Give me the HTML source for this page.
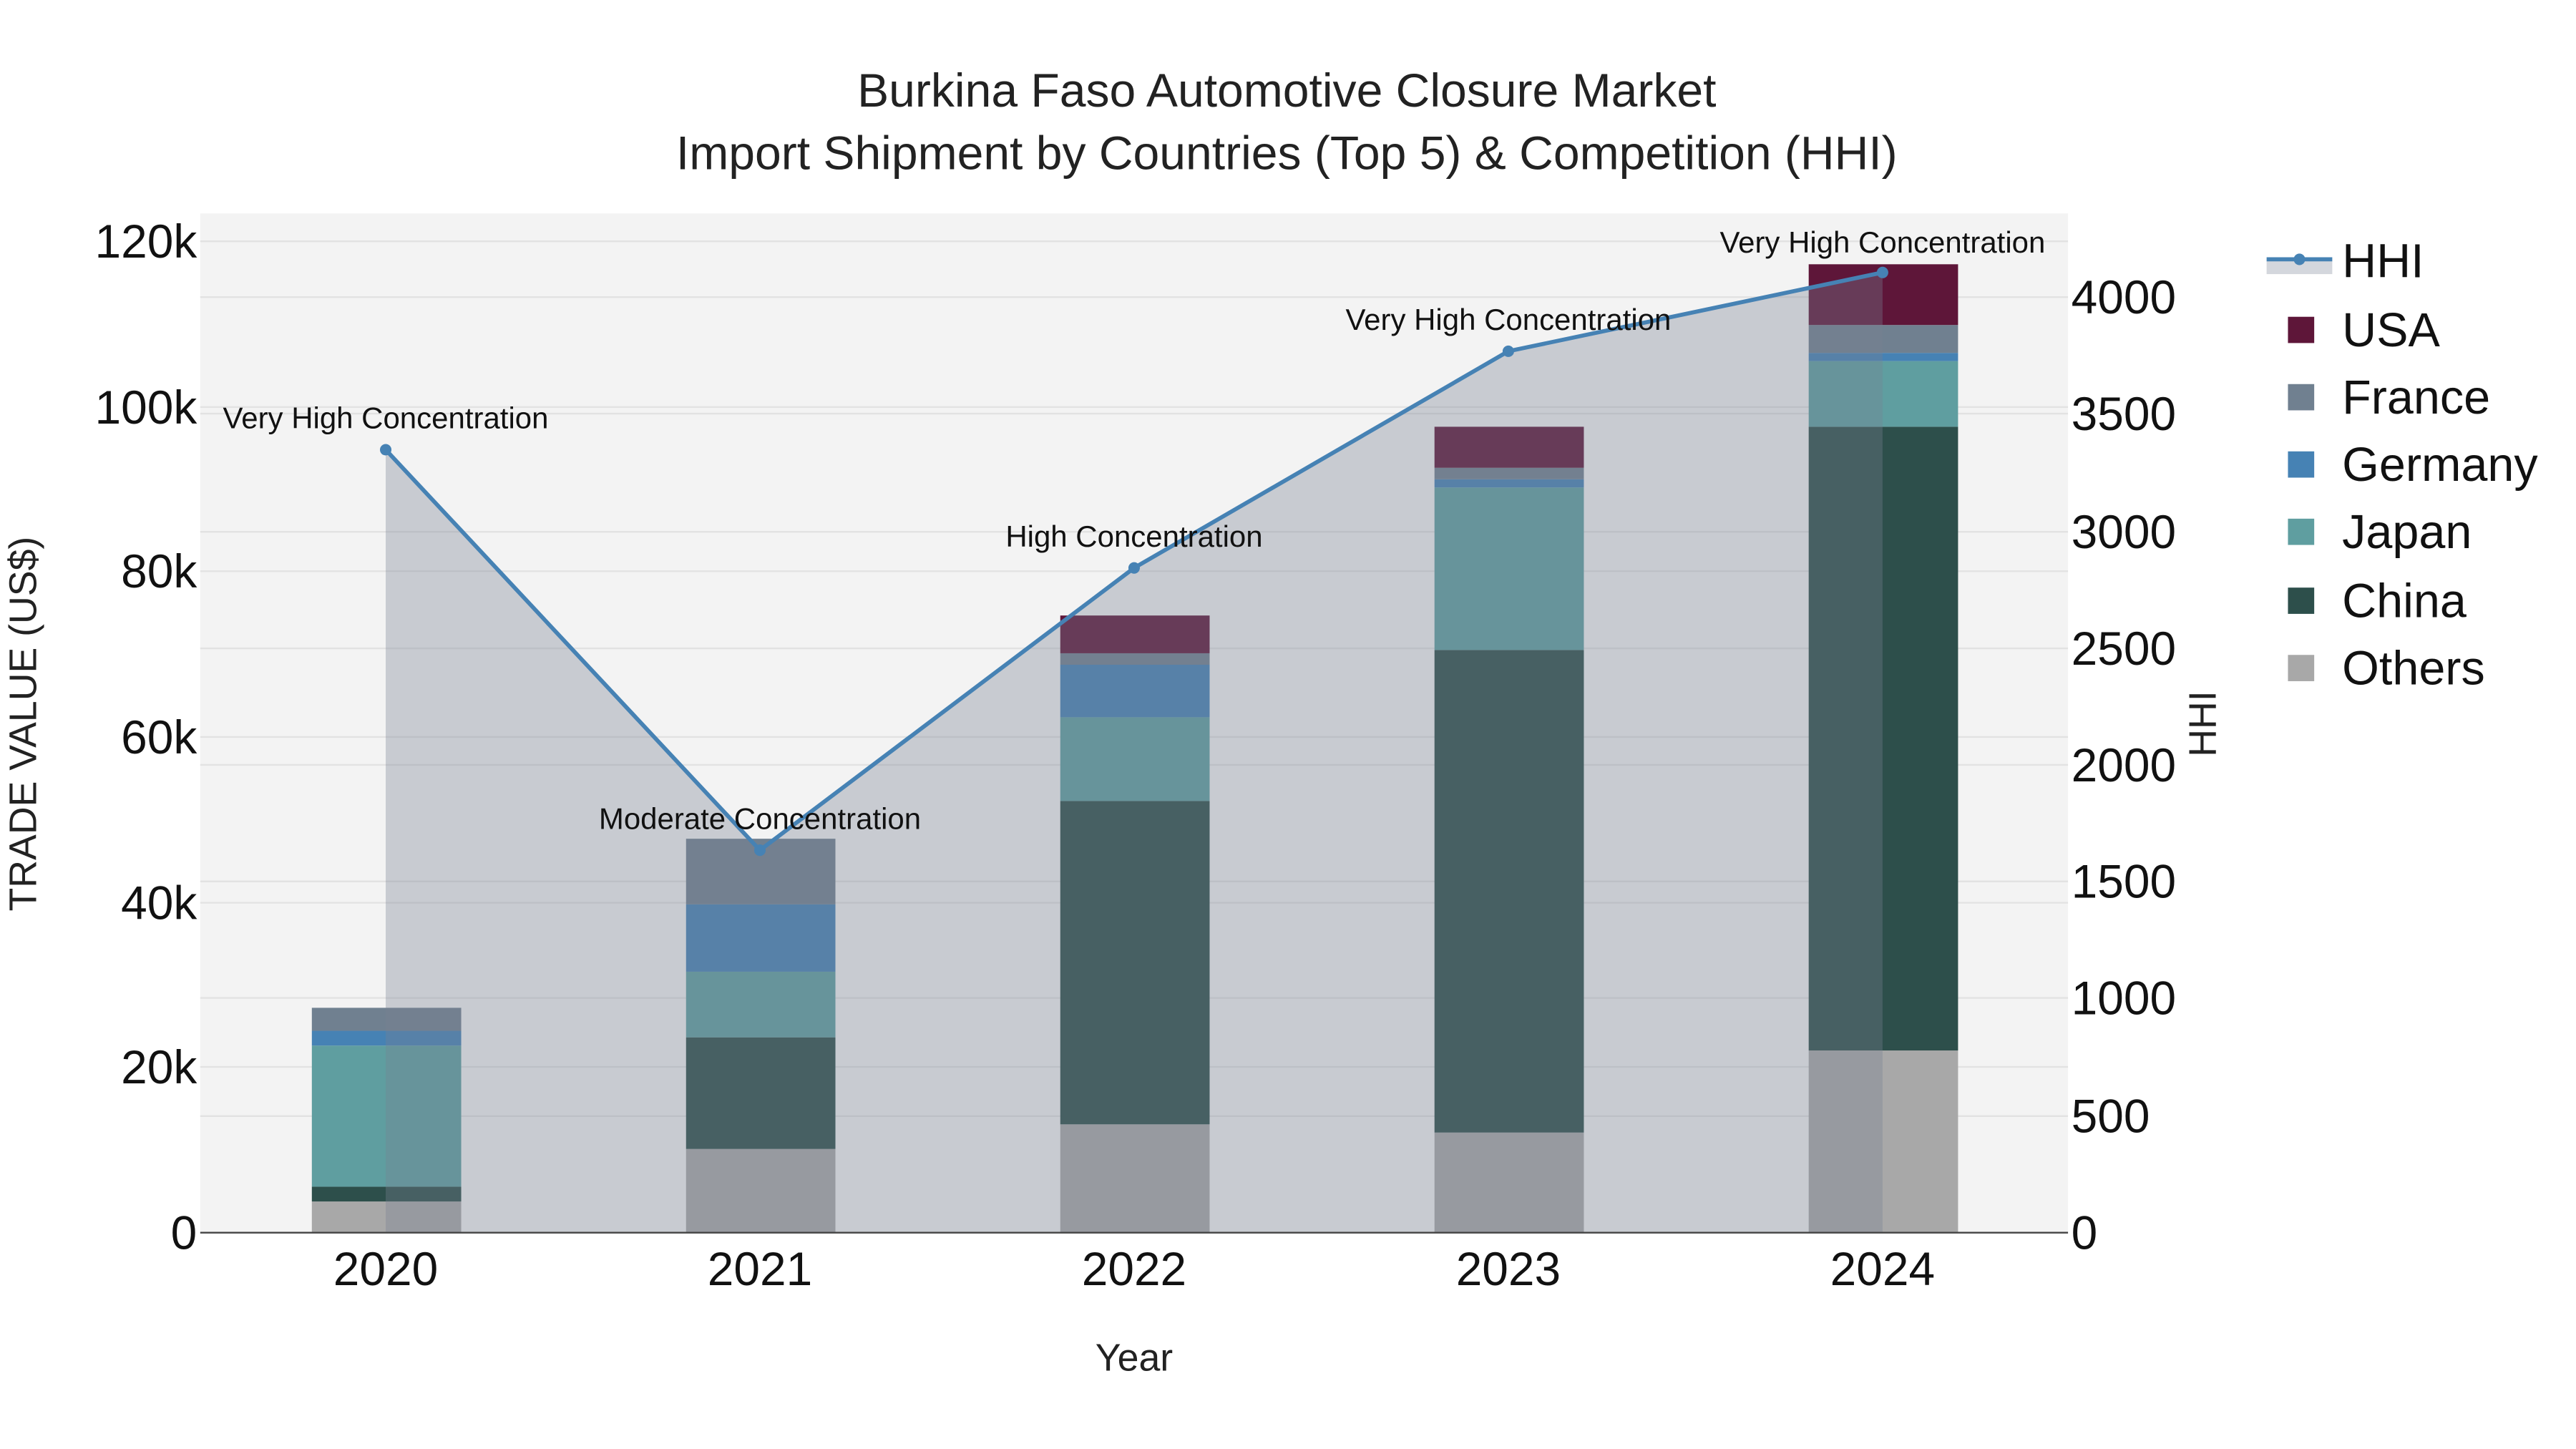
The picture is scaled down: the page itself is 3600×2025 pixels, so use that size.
<!DOCTYPE html>
<html><head><meta charset="utf-8"><style>html,body{margin:0;padding:0;background:#fff}svg{display:block}</style></head>
<body>
<svg width="3600" height="2025" viewBox="0 0 1569.5 882.8" preserveAspectRatio="none" xmlns="http://www.w3.org/2000/svg" font-family="Liberation Sans, Arial, sans-serif">
<rect width="1600" height="900" fill="#fff"/>
<rect x="122" y="130" width="1138" height="621" fill="#f3f3f3"/>
<g stroke="#e2e2e2" stroke-width="1">
<line x1="122" x2="1260" y1="147" y2="147"/><line x1="122" x2="1260" y1="248" y2="248"/><line x1="122" x2="1260" y1="348" y2="348"/><line x1="122" x2="1260" y1="449" y2="449"/><line x1="122" x2="1260" y1="550" y2="550"/><line x1="122" x2="1260" y1="650" y2="650"/>
<line x1="122" x2="1260" y1="181" y2="181"/><line x1="122" x2="1260" y1="252" y2="252"/><line x1="122" x2="1260" y1="324" y2="324"/><line x1="122" x2="1260" y1="395" y2="395"/><line x1="122" x2="1260" y1="466" y2="466"/><line x1="122" x2="1260" y1="537" y2="537"/><line x1="122" x2="1260" y1="608" y2="608"/><line x1="122" x2="1260" y1="680" y2="680"/>
</g>
<g>
<rect x="190" y="732" width="91" height="19" fill="#a8a8a8"/>
<rect x="190" y="723" width="91" height="9" fill="#2d4f4b"/>
<rect x="190" y="637" width="91" height="86" fill="#5f9ea0"/>
<rect x="190" y="628" width="91" height="9" fill="#4682b4"/>
<rect x="190" y="614" width="91" height="14" fill="#708090"/>
<rect x="418" y="700" width="91" height="51" fill="#a8a8a8"/>
<rect x="418" y="632" width="91" height="68" fill="#2d4f4b"/>
<rect x="418" y="592" width="91" height="40" fill="#5f9ea0"/>
<rect x="418" y="551" width="91" height="41" fill="#4682b4"/>
<rect x="418" y="511" width="91" height="40" fill="#708090"/>
<rect x="646" y="685" width="91" height="66" fill="#a8a8a8"/>
<rect x="646" y="488" width="91" height="197" fill="#2d4f4b"/>
<rect x="646" y="437" width="91" height="51" fill="#5f9ea0"/>
<rect x="646" y="405" width="91" height="32" fill="#4682b4"/>
<rect x="646" y="398" width="91" height="7" fill="#708090"/>
<rect x="646" y="375" width="91" height="23" fill="#5e1639"/>
<rect x="874" y="690" width="91" height="61" fill="#a8a8a8"/>
<rect x="874" y="396" width="91" height="294" fill="#2d4f4b"/>
<rect x="874" y="297" width="91" height="99" fill="#5f9ea0"/>
<rect x="874" y="292" width="91" height="5" fill="#4682b4"/>
<rect x="874" y="285" width="91" height="7" fill="#708090"/>
<rect x="874" y="260" width="91" height="25" fill="#5e1639"/>
<rect x="1102" y="640" width="91" height="111" fill="#a8a8a8"/>
<rect x="1102" y="260" width="91" height="380" fill="#2d4f4b"/>
<rect x="1102" y="220" width="91" height="40" fill="#5f9ea0"/>
<rect x="1102" y="215" width="91" height="5" fill="#4682b4"/>
<rect x="1102" y="198" width="91" height="17" fill="#708090"/>
<rect x="1102" y="161" width="91" height="37" fill="#5e1639"/>
</g>
<polygon points="235,751 235,274 463,518 691,346 919,214 1147,166 1147,751" fill="rgba(119,130,145,0.35)"/>
<polyline points="235,274 463,518 691,346 919,214 1147,166" fill="none" stroke="#4682b4" stroke-width="2.5"/>
<g fill="#4682b4"><circle cx="235" cy="274" r="3.5"/><circle cx="463" cy="518" r="3.5"/><circle cx="691" cy="346" r="3.5"/><circle cx="919" cy="214" r="3.5"/><circle cx="1147" cy="166" r="3.5"/></g>
<line x1="122" x2="1260" y1="751" y2="751" stroke="#444" stroke-width="1"/>
<g font-size="18.3" text-anchor="middle" fill="#111">
<text x="235" y="261">Very High Concentration</text>
<text x="463" y="505">Moderate Concentration</text>
<text x="691" y="333">High Concentration</text>
<text x="919" y="201">Very High Concentration</text>
<text x="1147" y="154">Very High Concentration</text>
</g>
<g font-size="28.8" text-anchor="middle" fill="#222">
<text x="784" y="65">Burkina Faso Automotive Closure Market</text>
<text x="784" y="103">Import Shipment by Countries (Top 5) &amp; Competition (HHI)</text>
</g>
<g font-size="28.7" text-anchor="end" fill="#111">
<text x="120" y="761">0</text><text x="120" y="660">20k</text><text x="120" y="560">40k</text><text x="120" y="459">60k</text><text x="120" y="358">80k</text><text x="120" y="258">100k</text><text x="120" y="157">120k</text>
</g>
<g font-size="28.7" text-anchor="start" fill="#111">
<text x="1262" y="761">0</text><text x="1262" y="690">500</text><text x="1262" y="618">1000</text><text x="1262" y="547">1500</text><text x="1262" y="476">2000</text><text x="1262" y="405">2500</text><text x="1262" y="334">3000</text><text x="1262" y="262">3500</text><text x="1262" y="191">4000</text>
</g>
<g font-size="28.7" text-anchor="middle" fill="#111">
<text x="235" y="783">2020</text><text x="463" y="783">2021</text><text x="691" y="783">2022</text><text x="919" y="783">2023</text><text x="1147" y="783">2024</text>
</g>
<text x="691" y="835" font-size="23.4" text-anchor="middle" fill="#222">Year</text>
<text transform="translate(22,441) rotate(-90)" font-size="23.4" text-anchor="middle" fill="#222">TRADE VALUE (US$)</text>
<text transform="translate(1350,441) rotate(-90)" font-size="23.4" text-anchor="middle" fill="#222">HHI</text>
<rect x="1381" y="159" width="40" height="8" fill="#d4d7dd"/>
<line x1="1381" x2="1421" y1="158" y2="158" stroke="#4682b4" stroke-width="2.5"/>
<circle cx="1401" cy="158" r="3.5" fill="#4682b4"/>
<g font-size="29" fill="#111">
<text x="1427" y="169">HHI</text>
<text x="1427" y="211">USA</text>
<text x="1427" y="252">France</text>
<text x="1427" y="293">Germany</text>
<text x="1427" y="334">Japan</text>
<text x="1427" y="376">China</text>
<text x="1427" y="417">Others</text>
</g>
<rect x="1394" y="193" width="16" height="16" fill="#5e1639"/>
<rect x="1394" y="234" width="16" height="16" fill="#708090"/>
<rect x="1394" y="275" width="16" height="16" fill="#4682b4"/>
<rect x="1394" y="316" width="16" height="16" fill="#5f9ea0"/>
<rect x="1394" y="358" width="16" height="16" fill="#2d4f4b"/>
<rect x="1394" y="399" width="16" height="16" fill="#a8a8a8"/>
</svg>
</body></html>
